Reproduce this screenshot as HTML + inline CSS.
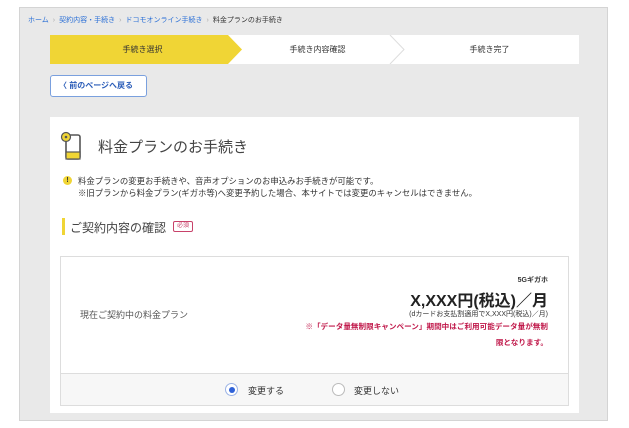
<!DOCTYPE html>
<html><head><meta charset="utf-8"><style>
*{margin:0;padding:0;box-sizing:border-box}
body{width:629px;height:428px;background:#fff;font-family:"Liberation Sans","Noto Sans CJK JP",sans-serif;position:relative;overflow:hidden;color:#333}
.a{position:absolute}
.outer{left:19px;top:7px;width:589px;height:414px;background:#e9e9e9;border:1px solid #d4d4d4}
.bc{left:28px;top:15px;font-size:7px;color:#2a6fd6;white-space:nowrap}
.bc span.g{color:#aaa;margin:0 4px}
.bc span.k{color:#333}
.steps{left:50px;top:35px;width:529px;height:29px;background:#fff}
.st{position:absolute;top:0;height:29px;line-height:29px;font-size:8px;text-align:center;color:#333}
.back{left:50px;top:75px;width:97px;height:22px;background:#fff;border:1px solid #7aa0de;border-radius:3px;font-size:8px;font-weight:bold;color:#2a5cb8;line-height:20px;padding-left:8px}
.card{left:50px;top:117px;width:529px;height:296px;background:#fff}
.box{left:60px;top:256px;width:509px;height:150px;border:1px solid #ddd;background:#fff}
.rad{left:61px;top:373px;width:507px;height:32px;background:#f7f7f7;border-top:1px solid #ddd}
.r{position:absolute;font-size:9px;color:#333;text-align:right;white-space:nowrap}
</style></head><body>
<div class="a outer"></div>
<div class="a bc">ホーム<span class="g">›</span>契約内容・手続き<span class="g">›</span>ドコモオンライン手続き<span class="g">›</span><span class="k">料金プランのお手続き</span></div>
<div class="a steps">
<svg class="a" style="left:0;top:0" width="529" height="29"><polygon points="0,0 178,0 192,14.5 178,29 0,29" fill="#f0d535"/><polyline points="340,0 354,14.5 340,29" fill="none" stroke="#ddd"/></svg>
<div class="st" style="left:0;width:185px">手続き選択</div>
<div class="st" style="left:185px;width:165px">手続き内容確認</div>
<div class="st" style="left:350px;width:179px">手続き完了</div>
</div>
<div class="a back">〈 前のページへ戻る</div>
<div class="a card"></div>
<svg class="a" style="left:60px;top:131px" width="24" height="30"><rect x="6" y="4" width="14" height="24" rx="2" fill="none" stroke="#555" stroke-width="1.6"/><rect x="6" y="21" width="14" height="7" fill="#f0d535" stroke="#555" stroke-width="1.2"/><circle cx="6" cy="6" r="4.5" fill="#f0d535" stroke="#555" stroke-width="1.2"/><circle cx="6" cy="6" r="1.3" fill="#555"/></svg>
<div class="a" style="left:98px;top:136px;font-size:15px;color:#444">料金プランのお手続き</div>
<div class="a" style="left:63px;top:176px;width:9px;height:9px;border-radius:50%;background:#f0d535;font-size:7px;font-weight:bold;text-align:center;line-height:9px">!</div>
<div class="a" style="left:78px;top:175px;font-size:8.4px;line-height:12px;color:#333;white-space:nowrap">料金プランの変更お手続きや、音声オプションのお申込みお手続きが可能です。<br>※旧プランから料金プラン(ギガホ等)へ変更予約した場合、本サイトでは変更のキャンセルはできません。</div>
<div class="a" style="left:62px;top:218px;width:3px;height:17px;background:#f0d535"></div>
<div class="a" style="left:70px;top:219px;font-size:12px;color:#444">ご契約内容の確認</div>
<div class="a" style="left:173px;top:221px;width:20px;height:11px;border:1px solid #c8426a;border-radius:2px;font-size:6px;color:#c8426a;text-align:center;line-height:9px">必須</div>
<div class="a box"></div>
<div class="a" style="left:80px;top:308px;font-size:9px;color:#555">現在ご契約中の料金プラン</div>
<div class="r" style="right:81px;top:275px;font-size:7px;font-weight:bold">5Gギガホ</div>
<div class="r" style="right:81px;top:287px;font-size:16px;font-weight:bold;color:#222">X,XXX円(税込)／月</div>
<div class="r" style="right:81px;top:309px;font-size:7px">(dカードお支払割適用でX,XXX円(税込)／月)</div>
<div class="r" style="right:81px;top:321px;font-size:7.6px;color:#c0184a;font-weight:bold">※「データ量無制限キャンペーン」期間中はご利用可能データ量が無制</div>
<div class="r" style="right:81px;top:337px;font-size:7.6px;color:#c0184a;font-weight:bold">限となります。</div>
<div class="a rad"></div>
<div class="a" style="left:225px;top:383px;width:13px;height:13px;border-radius:50%;border:1px solid #9bb3e6;background:#fff"><div style="margin:2.5px;width:6px;height:6px;border-radius:50%;background:#2f62d8"></div></div>
<div class="a" style="left:248px;top:384px;font-size:9px">変更する</div>
<div class="a" style="left:332px;top:383px;width:13px;height:13px;border-radius:50%;border:1px solid #bbb;background:#fff"></div>
<div class="a" style="left:354px;top:384px;font-size:9px">変更しない</div>
</body></html>
